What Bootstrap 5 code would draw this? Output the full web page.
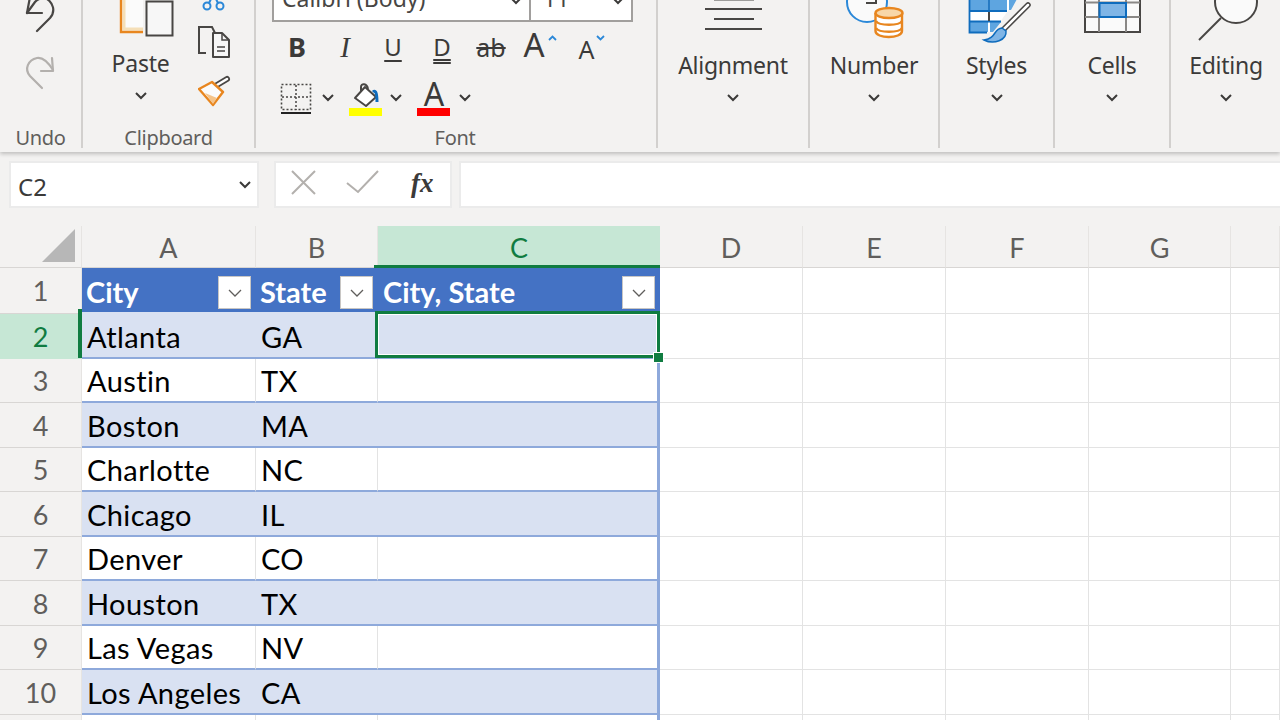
<!DOCTYPE html>
<html lang="en">
<head>
<meta charset="utf-8">
<title>Excel</title>
<link href="https://cdn.jsdelivr.net/npm/bootstrap@5.3.0/dist/css/bootstrap.min.css" rel="stylesheet">
<style>
html,body{height:720px;overflow:hidden}
body{background:#fff;font-family:"Noto Sans",sans-serif;color:#484644}
svg{display:block;flex:none}
.rib{height:152px;background:#f3f2f1;box-shadow:0 2px 4px rgba(0,0,0,.22);position:relative;z-index:2;overflow:hidden}
.rg{height:148px;border-right:2px solid #d2d0ce;position:relative;flex:none}
.rg-1{width:83px}.rg-2{width:173px}.rg-3{width:402px}.rg-4{width:152px}.rg-5{width:130px}.rg-6{width:115px}.rg-7{width:116px}.rg-8{width:110px;border-right:0}
.rg-lab{font-size:20px;line-height:24px;color:#605e5c;text-align:center;height:24px;letter-spacing:-.3px;margin-top:8px}
.big-lab{font-size:23px;line-height:30px;letter-spacing:-.25px;color:#3b3a39;white-space:nowrap;margin-top:2px}
.chev{margin-top:13px}
.fontbox{height:22px;width:361px;margin-left:16px;background:#fff;border:solid #a19f9d;border-width:0 2px 2px 2px;overflow:hidden;position:relative;flex:none}
.fb-a{width:257px;border-right:2px solid #a19f9d;height:20px;overflow:hidden;position:relative}
.fb-t{font-size:23px;line-height:24px;margin-top:-14px;margin-left:8px;color:#484644}
.cb-ch{position:absolute;top:-3px;right:6px}
.fbtn{width:48px;height:44px;font-size:27px;line-height:44px;text-align:center;color:#3b3a39;position:relative}
.btn-i{font-family:"Liberation Serif",serif;font-style:italic;font-size:29px}
.btn-u{font-size:24px;text-decoration:underline;text-underline-offset:4px}
.btn-d{width:50px;font-size:24px;text-decoration:underline double;text-underline-offset:3px}
.btn-ab{font-size:25px;text-decoration:line-through}
.btn-gr{font-size:33px;line-height:40px;padding-right:10px}
.btn-sh{font-size:25px;line-height:48px;padding-right:1px}
.tinyup,.tinydn{position:absolute;left:33px;top:10px}
.fx-row{height:74px;background:#f3f2f1;padding-top:9px}
.fb-box{background:#fff;border:2px solid #ebebeb;height:47px}
.nm{width:250px;margin-left:9px;font-size:24px;padding:4px 0 0 7px;color:#3b3a39}
.nm svg{margin-top:-3px}
.fxb{width:178px;margin-left:15px}
.fin{margin-left:7px;flex:1;border-right:0}
.fxt{font-family:"Liberation Serif",serif;font-style:italic;font-weight:700;font-size:27px;color:#3b3a39;margin-left:26px;padding-bottom:3px}
.sheet{display:grid;grid-template-columns:82px 174px 122px 282px 143px 143px 143px 142px 49px;grid-template-rows:42px 46px 45px 44px 45px 44px 45px 44px 45px 44px 45px 6px;font-family:Lato,sans-serif}
.ch,.rh{background:#f3f2f1;color:#605e5c;display:flex;align-items:center;justify-content:center;font-size:27px;border-right:1px solid #e6e4e2;border-bottom:1px solid #d8d6d4;position:relative}
.ch{padding-top:4px}
.rh{padding-top:2px}
.ch-corner{justify-content:flex-end;align-items:flex-end;padding:0 6px 5px 0}
.ch-on{background:#c6e7d5;color:#107c41;border-right:0}
.rh-on{background:#c6e7d5;color:#107c41;border-bottom-color:#c6e7d5}
.cl{display:flex;align-items:center;padding:1px 0 0 5px;font-size:29px;letter-spacing:.4px;color:#000;border-right:1px solid #e3e3e3;border-bottom:1px solid #e3e3e3;white-space:nowrap;position:relative;line-height:1}
.hd{background:#4472c4;color:#fff;font-weight:700;padding:2px 0 0 4px;letter-spacing:0;border:0;border-bottom:2px solid #d9e1f2}
.hd-c{padding-left:5px}
.bnd{background:#d9e1f2}
.ln{border-bottom:2px solid #8ea9db}
.ln-t{border-right:0}
.edge{border-right:3px solid #8ea9db}
.flt{position:absolute;right:5px;top:8px;width:33px;height:33px;background:#fff;border:1px solid #c8c6c4;display:flex;align-items:center;justify-content:center}
.selbox{position:absolute;left:-3px;top:-3px;right:-3px;bottom:-1px;border:3px solid #107c41;box-shadow:inset 0 0 0 1px #fff;z-index:2}
.hdl{position:absolute;right:-6px;bottom:-5px;width:9px;height:9px;background:#107c41;outline:1px solid #fff;z-index:3}
.topg{position:absolute;left:-4px;right:0;top:-3px;height:3px;background:#107c41;z-index:2}
.lftg{position:absolute;right:-1px;top:-5px;bottom:0;width:4px;background:#107c41;z-index:2}
</style>
</head>
<body>
<!-- ribbon -->
<div class="rib d-flex">
  <div class="rg rg-1 d-flex flex-column">
    <svg width="81" height="118" viewBox="0 0 81 118" fill="none" stroke-width="2.200" stroke-linecap="round" stroke-linejoin="round">
      <path d="M37 31 50 18C56 11 53 3 47-1 42-3 38-1 35 2L27 13" stroke="#484644"/><path d="M30-3 27 13 42 13" stroke="#484644"/>
      <path d="M42 88 30 76C24 69 28 60 37 58 43 57 48 62 53 70" stroke="#b3b0ad"/><path d="M52 58 53 71 41 71" stroke="#b3b0ad"/>
    </svg>
    <div class="rg-lab">Undo</div>
  </div>
  <div class="rg rg-2 d-flex flex-column">
    <div class="d-flex" style="height:118px">
      <div class="d-flex flex-column align-items-center" style="width:115px">
        <svg width="115" height="48" viewBox="82 0 115 48" fill="none">
          <path d="M120-2V32H142V-2Z" fill="#fbfbfb"/><path d="M123-2V29H142" stroke="#f5dfb8" stroke-width="3"/><path d="M120-2V32H142" stroke="#e8861f" stroke-width="2.400"/>
          <rect x="145.500" y="1.500" width="26" height="34" fill="#f7f7f7" stroke="#484644" stroke-width="2"/>
        </svg>
        <div class="big-lab" style="margin-top:0">Paste</div>
        <svg width="16" height="10" viewBox="0 0 16 10" fill="none" class="chev"><path d="M3 2 8 7 13 2" stroke="#3b3a39" stroke-width="2"/></svg>
      </div>
      <svg width="57" height="118" viewBox="197 0 57 118" fill="none" stroke-width="2">
        <circle cx="206" cy="6" r="3.500" stroke="#2b88d8"/><circle cx="219" cy="6" r="3.500" stroke="#2b88d8"/><path d="M208 3 210-1M217 3 215-1" stroke="#2b88d8"/>
        <path d="M205 53H198V27H211L214 33" stroke="#484644"/><path d="M212 33H221L228 40V57H212Z" fill="#f7f7f7" stroke="#484644" stroke-linejoin="round"/><path d="M221 33V40H228M216 47H224M216 51H224" stroke="#484644" stroke-width="1.500"/>
        <path d="M216 85 226 79" stroke="#484644" stroke-width="6" stroke-linecap="round"/><path d="M216 85 226 79" stroke="#fff" stroke-width="2.500" stroke-linecap="round"/>
        <path d="M198 89 211 82 222 92 212 105Z" fill="#fbfbfb" stroke="#e8861f" stroke-width="2.400" stroke-linejoin="round"/><path d="M204 93 216 98 212 104Z" fill="#f5c48a"/>
      </svg>
    </div>
    <div class="rg-lab">Clipboard</div>
  </div>
  <div class="rg rg-3 d-flex flex-column">
    <div class="fontbox d-flex">
      <div class="fb-a"><div class="fb-t">Calibri (Body)</div><svg class="cb-ch" width="14" height="8" viewBox="0 0 14 8" fill="none"><path d="M2 1 7 6 12 1" stroke="#3b3a39" stroke-width="2"/></svg></div>
      <div class="fb-t" style="margin-left:12px">11</div><svg class="cb-ch" width="14" height="8" viewBox="0 0 14 8" fill="none"><path d="M2 1 7 6 12 1" stroke="#3b3a39" stroke-width="2"/></svg>
    </div>
    <div class="d-flex flex-shrink-0" style="margin-left:17px;margin-top:3px">
      <div class="fbtn fw-bold">B</div>
      <div class="fbtn btn-i">I</div>
      <div class="fbtn btn-u">U</div>
      <div class="fbtn btn-d">D</div>
      <div class="fbtn btn-ab">ab</div>
      <div class="fbtn btn-gr">A<svg class="tinyup" width="9" height="6" viewBox="0 0 9 6" fill="none"><path d="M1 5 4.500 1.500 8 5" stroke="#2b88d8" stroke-width="1.800"/></svg></div>
      <div class="fbtn btn-sh">A<svg class="tinydn" width="9" height="6" viewBox="0 0 9 6" fill="none"><path d="M1 1 4.500 4.500 8 1" stroke="#2b88d8" stroke-width="1.800"/></svg></div>
    </div>
    <div class="flex-shrink-0" style="margin-left:23px">
      <svg width="200" height="49" viewBox="278 69 200 49" fill="none">
        <rect x="280.500" y="84.500" width="29" height="25" stroke="#484644" stroke-width="1.600" stroke-dasharray="2 2"/><path d="M295 85V110M281 97H309" stroke="#484644" stroke-width="1.500" stroke-dasharray="2 2"/><path d="M280 113H310" stroke="#222" stroke-width="2"/>
        <path d="M322 95 327 100 332 95M390 95 395 100 400 95M459 95 464 100 469 95" stroke="#3b3a39" stroke-width="2"/>
        <path d="M354 98 364 87 375 97 365 106Z" stroke="#484644" stroke-width="2" stroke-linejoin="round" fill="#fff"/><path d="M360 91V87C360 83 366 83 367 89" stroke="#484644" stroke-width="2"/><path d="M372 92C374 90 376 91 376 102" stroke="#0f6cbd" stroke-width="3"/>
        <rect x="348" y="108" width="33" height="8" fill="#ff0"/>
        <text x="433" y="106" text-anchor="middle" font-family="Noto Sans, sans-serif" font-size="32" fill="#3b3a39">A</text>
        <rect x="416" y="108" width="33" height="8" fill="#f00"/>
      </svg>
    </div>
    <div class="rg-lab" style="padding-right:2px">Font</div>
  </div>
  <div class="rg rg-4 d-flex flex-column align-items-center">
    <svg width="150" height="48" viewBox="657 0 150 48" fill="none" stroke="#484644" stroke-width="2"><path d="M704 9H761M713 19H753M704 29H761M713-.5H753"/></svg>
    <div class="big-lab">Alignment</div>
    <svg width="16" height="10" viewBox="0 0 16 10" fill="none" class="chev"><path d="M3 2 8 7 13 2" stroke="#3b3a39" stroke-width="2"/></svg>
  </div>
  <div class="rg rg-5 d-flex flex-column align-items-center">
    <svg width="128" height="48" viewBox="809 0 128 48" fill="none"><circle cx="866" cy="2" r="20" fill="#fafafa" stroke="#2b88d8" stroke-width="2"/><path d="M875-1V3H865" stroke="#484644" stroke-width="2"/>
      <path d="M874.500 13V31C874.500 39 901 39 901 31V13" fill="#fff" stroke="#e8861f" stroke-width="2.400"/><ellipse cx="888" cy="13" rx="13.500" ry="5" fill="#f8d7a8" stroke="#e8861f" stroke-width="2.400"/><path d="M875 21C878 26 898 26 901 21M875 28C878 33 898 33 901 28" stroke="#e8861f" stroke-width="2.400"/></svg>
    <div class="big-lab">Number</div>
    <svg width="16" height="10" viewBox="0 0 16 10" fill="none" class="chev"><path d="M3 2 8 7 13 2" stroke="#3b3a39" stroke-width="2"/></svg>
  </div>
  <div class="rg rg-6 d-flex flex-column align-items-center">
    <svg width="113" height="48" viewBox="939 0 113 48" fill="none"><path d="M969-2V32H992L1016-2Z" fill="#fff"/><path d="M969-1H987V10H969ZM989-1H1006V10H989ZM1008-1H1016L1010 10H1008ZM969 22H987V32H969ZM989 22H1000L992 32H989Z" fill="#5ea5e0"/><path d="M968.500-2V32.500H986M968 11H1006M968 21.500H1000M988-2V10" stroke="#0f6cbd" stroke-width="1.800"/><path d="M988 12V21" stroke="#484644" stroke-width="2"/>
      <path d="M1027 5 1003 29" stroke="#484644" stroke-width="5.500" stroke-linecap="round"/><path d="M1027 5 1003 29" stroke="#fff" stroke-width="2.500" stroke-linecap="round"/><path d="M1001 28C992 29 996 38 983 40 993 45 1006 40 1005 31Z" fill="#7fb5e6" stroke="#0f6cbd" stroke-width="1.500"/></svg>
    <div class="big-lab">Styles</div>
    <svg width="16" height="10" viewBox="0 0 16 10" fill="none" class="chev"><path d="M3 2 8 7 13 2" stroke="#3b3a39" stroke-width="2"/></svg>
  </div>
  <div class="rg rg-7 d-flex flex-column align-items-center">
    <svg width="114" height="48" viewBox="1054 0 114 48" fill="none"><path d="M1084-2V32H1139V-2" fill="#fafafa" stroke="#484644" stroke-width="2"/><path d="M1084 2.500H1139M1084 17H1139M1098-2V32M1125-2V32" stroke="#8a8886" stroke-width="2"/><rect x="1098.500" y="3" width="26.500" height="14" fill="#7fb5e6" stroke="#0f6cbd" stroke-width="2"/></svg>
    <div class="big-lab">Cells</div>
    <svg width="16" height="10" viewBox="0 0 16 10" fill="none" class="chev"><path d="M3 2 8 7 13 2" stroke="#3b3a39" stroke-width="2"/></svg>
  </div>
  <div class="rg rg-8 d-flex flex-column align-items-center">
    <svg width="110" height="48" viewBox="1170 0 110 48" fill="none" stroke="#484644" stroke-width="2"><circle cx="1235" cy="2" r="21" fill="#fafafa"/><path d="M1220 18 1198 40"/></svg>
    <div class="big-lab">Editing</div>
    <svg width="16" height="10" viewBox="0 0 16 10" fill="none" class="chev"><path d="M3 2 8 7 13 2" stroke="#3b3a39" stroke-width="2"/></svg>
  </div>
</div>
<!-- formula bar -->
<div class="fx-row d-flex">
  <div class="fb-box nm d-flex align-items-center justify-content-between">C2
    <svg width="16" height="10" viewBox="0 0 16 10" fill="none" class="me-1"><path d="M3 2 8 7 13 2" stroke="#3b3a39" stroke-width="2"/></svg></div>
  <div class="fb-box fxb d-flex align-items-center">
    <svg width="100" height="30" viewBox="286 172 100 30" fill="none" stroke="#b3b0ad" stroke-width="2" style="margin-left:9px"><path d="M293 173 316 196M316 173 293 196M348 185 359 194 379 173"/></svg>
    <span class="fxt">fx</span>
  </div>
  <div class="fb-box fin"></div>
</div>
<!-- sheet -->
<div class="sheet">
  <div class="ch ch-corner"><svg width="33" height="33" viewBox="0 0 33 33"><path d="M33 0V33H0Z" fill="#b7b7b7"/></svg></div>
  <div class="ch">A</div><div class="ch">B</div><div class="ch ch-on">C</div><div class="ch">D</div><div class="ch">E</div><div class="ch">F</div><div class="ch">G</div><div class="ch"></div>

  <div class="rh">1</div>
  <div class="cl hd">City<span class="flt"><svg width="16" height="10" viewBox="0 0 16 10" fill="none"><path d="M2 2 8 8 14 2" stroke="#605e5c" stroke-width="1.300"/></svg></span></div>
  <div class="cl hd">State<span class="flt"><svg width="16" height="10" viewBox="0 0 16 10" fill="none"><path d="M2 2 8 8 14 2" stroke="#605e5c" stroke-width="1.300"/></svg></span></div>
  <div class="cl hd hd-c">City, State<span class="flt"><svg width="16" height="10" viewBox="0 0 16 10" fill="none"><path d="M2 2 8 8 14 2" stroke="#605e5c" stroke-width="1.300"/></svg></span><i class="topg"></i></div>
  <div class="cl"></div><div class="cl"></div><div class="cl"></div><div class="cl"></div><div class="cl"></div>

  <div class="rh rh-on">2<i class="lftg"></i></div>
  <div class="cl bnd ln ln-t">Atlanta</div><div class="cl bnd ln ln-t">GA</div><div class="cl bnd ln edge"><i class="selbox"></i><i class="hdl"></i></div>
  <div class="cl"></div><div class="cl"></div><div class="cl"></div><div class="cl"></div><div class="cl"></div>

  <div class="rh">3</div><div class="cl ln">Austin</div><div class="cl ln">TX</div><div class="cl ln edge"></div>
  <div class="cl"></div><div class="cl"></div><div class="cl"></div><div class="cl"></div><div class="cl"></div>

  <div class="rh">4</div><div class="cl bnd ln ln-t">Boston</div><div class="cl bnd ln ln-t">MA</div><div class="cl bnd ln edge"></div>
  <div class="cl"></div><div class="cl"></div><div class="cl"></div><div class="cl"></div><div class="cl"></div>

  <div class="rh">5</div><div class="cl ln">Charlotte</div><div class="cl ln">NC</div><div class="cl ln edge"></div>
  <div class="cl"></div><div class="cl"></div><div class="cl"></div><div class="cl"></div><div class="cl"></div>

  <div class="rh">6</div><div class="cl bnd ln ln-t">Chicago</div><div class="cl bnd ln ln-t">IL</div><div class="cl bnd ln edge"></div>
  <div class="cl"></div><div class="cl"></div><div class="cl"></div><div class="cl"></div><div class="cl"></div>

  <div class="rh">7</div><div class="cl ln">Denver</div><div class="cl ln">CO</div><div class="cl ln edge"></div>
  <div class="cl"></div><div class="cl"></div><div class="cl"></div><div class="cl"></div><div class="cl"></div>

  <div class="rh">8</div><div class="cl bnd ln ln-t">Houston</div><div class="cl bnd ln ln-t">TX</div><div class="cl bnd ln edge"></div>
  <div class="cl"></div><div class="cl"></div><div class="cl"></div><div class="cl"></div><div class="cl"></div>

  <div class="rh">9</div><div class="cl ln">Las Vegas</div><div class="cl ln">NV</div><div class="cl ln edge"></div>
  <div class="cl"></div><div class="cl"></div><div class="cl"></div><div class="cl"></div><div class="cl"></div>

  <div class="rh">10</div><div class="cl bnd ln ln-t">Los Angeles</div><div class="cl bnd ln ln-t">CA</div><div class="cl bnd ln edge"></div>
  <div class="cl"></div><div class="cl"></div><div class="cl"></div><div class="cl"></div><div class="cl"></div>

  <div class="rh"></div><div class="cl"></div><div class="cl"></div><div class="cl edge"></div>
  <div class="cl"></div><div class="cl"></div><div class="cl"></div><div class="cl"></div><div class="cl"></div>
</div>
<script src="https://cdn.jsdelivr.net/npm/bootstrap@5.3.0/dist/js/bootstrap.bundle.min.js"></script>
</body>
</html>
